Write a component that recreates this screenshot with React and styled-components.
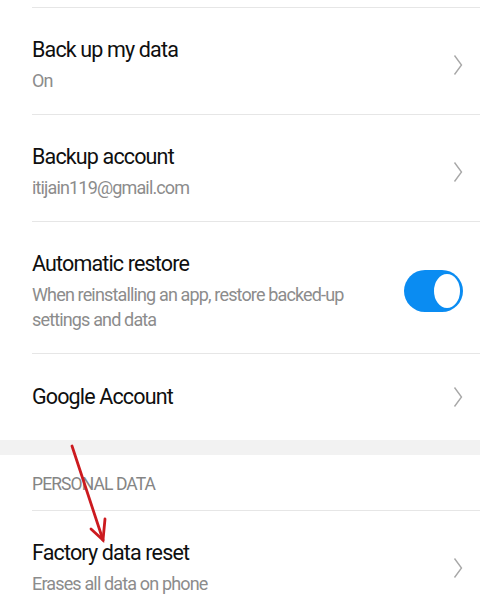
import React, { useState } from "react";
import styled, { createGlobalStyle } from "styled-components";

const GlobalStyle = createGlobalStyle`
  html, body {
    margin: 0;
    padding: 0;
    background: #fff;
    font-family: Roboto, "Noto Sans", Arial, sans-serif;
    overflow: hidden;
  }
`;

const items = [
  { title: "Back up my data", sub: ["On"], type: "link" },
  { title: "Backup account", sub: ["itijain119@gmail.com"], type: "link" },
  {
    title: "Automatic restore",
    sub: ["When reinstalling an app, restore backed-up", "settings and data"],
    type: "toggle",
  },
  { title: "Google Account", sub: [], type: "link" },
];

const Chevron = () => (
  <svg width="10" height="22" viewBox="0 0 10 22">
    <polyline
      points="1.5,1.5 8.5,11 1.5,20.5"
      fill="none"
      stroke="#a8a8a8"
      strokeWidth="1.4"
    />
  </svg>
);

const Arrow = () => (
  <ArrowLayer width="480" height="604" viewBox="0 0 480 604">
    <g fill="none" stroke="#cc1a1f" strokeWidth="2.8" strokeLinecap="round">
      <path d="M72 446 L103 540" />
      <path d="M105 519 L103 540 L91 529" />
    </g>
  </ArrowLayer>
);

const Item = ({ title, sub, type, on, onToggle }) => (
  <Row $single={sub.length === 0}>
    <Text>
      <Title>{title}</Title>
      {sub.length > 0 && (
        <Sub>
          {sub.map((line) => (
            <span key={line}>{line}</span>
          ))}
        </Sub>
      )}
    </Text>
    {type === "toggle" ? (
      <Switch $on={on} onClick={onToggle}>
        <Knob />
      </Switch>
    ) : (
      <Chevron />
    )}
  </Row>
);

export default function App() {
  const [restore, setRestore] = useState(true);

  return (
    <Screen>
      <GlobalStyle />
      <List>
        {items.map((it) => (
          <Item
            key={it.title}
            {...it}
            on={restore}
            onToggle={() => setRestore(!restore)}
          />
        ))}
      </List>
      <Gap />
      <SectionHeader>PERSONAL DATA</SectionHeader>
      <List>
        <Item
          title="Factory data reset"
          sub={["Erases all data on phone"]}
          type="link"
        />
      </List>
      <Arrow />
    </Screen>
  );
}

const Screen = styled.div`
  position: relative;
  width: 480px;
  height: 604px;
  overflow: hidden;
  background: #fff;
  padding-top: 7px;
  box-sizing: border-box;
`;

const List = styled.div`
  display: flex;
  flex-direction: column;
`;

const Row = styled.div`
  display: flex;
  align-items: center;
  justify-content: space-between;
  margin-left: 32px;
  padding: ${(p) => (p.$single ? "29px 17px 29px 0" : "28px 17px 21px 0")};
  border-top: 1px solid #e6e6e6;
`;

const Text = styled.div`
  display: flex;
  flex-direction: column;
`;

const Title = styled.div`
  font-size: 21.5px;
  line-height: 28px;
  color: #0f0f0f;
  letter-spacing: -0.85px;
`;

const Sub = styled.div`
  display: flex;
  flex-direction: column;
  margin-top: 4px;
  font-size: 18px;
  line-height: 25px;
  color: #8c8c8c;
  letter-spacing: -0.85px;
`;

const Switch = styled.div`
  display: flex;
  align-items: center;
  justify-content: ${(p) => (p.$on ? "flex-end" : "flex-start")};
  width: 59px;
  height: 42px;
  padding: 0 3px;
  box-sizing: border-box;
  border-radius: 21px;
  background: ${(p) => (p.$on ? "#0a8cf2" : "#c4c4c4")};
  cursor: pointer;
`;

const Knob = styled.div`
  width: 26px;
  height: 34px;
  border-radius: 50%;
  background: #fff;
`;

const Gap = styled.div`
  height: 15px;
  background: #f2f2f2;
`;

const SectionHeader = styled.div`
  margin-left: 32px;
  padding: 15px 0 12px;
  font-size: 17.5px;
  line-height: 28px;
  color: #858585;
  letter-spacing: -0.9px;
`;

const ArrowLayer = styled.svg`
  position: absolute;
  left: 0;
  top: 0;
  pointer-events: none;
`;
